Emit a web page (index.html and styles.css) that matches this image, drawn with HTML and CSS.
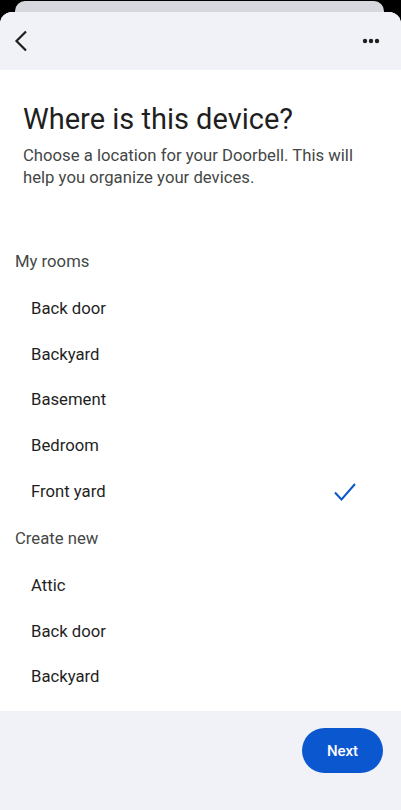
FILE: index.html
```html
<!DOCTYPE html>
<html>
<head>
    <meta charset="utf-8" />
    <title>Where is this device?</title>
    <meta name="viewport" content="width=device-width, initial-scale=1">
    <link rel="stylesheet" href="styles.css">
</head>
<body>
    <div class="backsheet"></div>
    <div class="sheet">
        <div class="topbar">
            <button class="iconbtn" aria-label="Back">
                <svg width="14" height="22" viewBox="0 0 14 22"><path d="M12 1.5 L2.5 11 L12 20.5" fill="none" stroke="#1f1f1f" stroke-width="2.2"/></svg>
            </button>
            <button class="iconbtn" aria-label="More">
                <svg width="18" height="6" viewBox="0 0 18 6"><circle cx="3" cy="3" r="2.2" fill="#1f1f1f"/><circle cx="9" cy="3" r="2.2" fill="#1f1f1f"/><circle cx="15" cy="3" r="2.2" fill="#1f1f1f"/></svg>
            </button>
        </div>
        <div class="conteudo">
            <h1 class="titulo">Where is this device?</h1>
            <p class="subtitulo">Choose a location for your Doorbell. This will help you organize your devices.</p>

            <div class="grupo">My rooms</div>
            <ul class="lista">
                <li>Back door</li>
                <li>Backyard</li>
                <li>Basement</li>
                <li>Bedroom</li>
                <li class="marcado">Front yard
                    <svg class="check" width="24" height="20" viewBox="0 0 24 20"><path d="M2 10.5 L8.5 17.5 L22 2" fill="none" stroke="#0b57d0" stroke-width="2"/></svg>
                </li>
            </ul>

            <div class="grupo">Create new</div>
            <ul class="lista">
                <li>Attic</li>
                <li>Back door</li>
                <li>Backyard</li>
            </ul>
        </div>
        <div class="rodape">
            <button class="proximo">Next</button>
        </div>
    </div>
</body>
</html>
```

FILE: styles.css
```css
body{
    margin: 0;
    background: #000;
    font-family: Roboto, "Liberation Sans", sans-serif;
    color: #1f1f1f;
    height: 810px;
    overflow: hidden;
}
.backsheet{
    margin: 1px 17px 0 15px;
    height: 11px;
    background: #d6d8dd;
    border-radius: 10px 10px 0 0;
}
.sheet{
    display: flex;
    flex-direction: column;
    height: 798px;
    background: #fff;
    border-radius: 12px 12px 0 0;
    overflow: hidden;
}
.topbar{
    display: flex;
    justify-content: space-between;
    align-items: center;
    height: 58px;
    padding: 0 17px 0 10px;
    background: #f0f2f7;
}
.iconbtn{
    border: none;
    background: none;
    padding: 4px;
    display: flex;
    align-items: center;
}
.conteudo{
    flex: 1;
    padding-top: 31px;
}
.titulo{
    margin: 0 23px;
    font-size: 29px;
    font-weight: 400;
    line-height: 36px;
    color: #1f1f1f;
}
.subtitulo{
    margin: 8px 23px 0;
    font-size: 16.7px;
    line-height: 22px;
    color: #444746;
}
.grupo{
    padding-left: 15px;
    font-size: 16.7px;
    line-height: 22px;
    color: #444746;
}
.subtitulo + .grupo{
    margin-top: 62px;
}
.lista + .grupo{
    margin-top: 14px;
}
.lista{
    list-style: none;
    margin: 13px 0 0;
    padding: 0;
}
.lista li{
    display: flex;
    justify-content: space-between;
    align-items: center;
    height: 45.6px;
    padding: 0 44px 0 31px;
    font-size: 16.7px;
    color: #1f1f1f;
}
.check{
    margin-top: 2px;
}
.rodape{
    display: flex;
    justify-content: flex-end;
    align-items: flex-start;
    box-sizing: border-box;
    height: 99px;
    padding: 17px 18px 0 0;
    background: #f0f2f7;
}
.proximo{
    width: 81px;
    height: 45px;
    border: none;
    border-radius: 23px;
    background: #0b57d0;
    color: #fff;
    font-family: Roboto, "Liberation Sans", sans-serif;
    font-size: 15px;
    font-weight: 500;
}
```
